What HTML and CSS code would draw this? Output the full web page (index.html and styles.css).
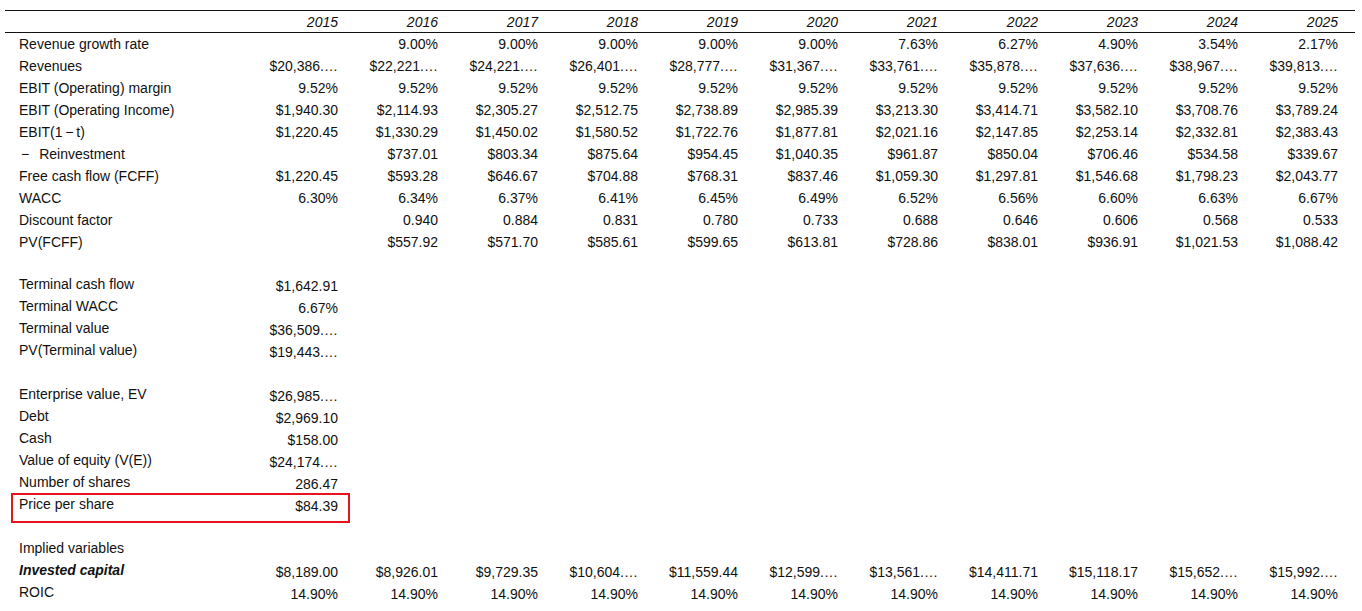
FILE: index.html
```html
<!DOCTYPE html>
<html lang="en">
<head>
<meta charset="utf-8">
<title>DCF valuation</title>
<link rel="stylesheet" href="styles.css">
</head>
<body>
<table class="dcf">
  <colgroup>
    <col class="c-label">
    <col class="c-val"><col class="c-val"><col class="c-val"><col class="c-val"><col class="c-val"><col class="c-val">
    <col class="c-val"><col class="c-val"><col class="c-val"><col class="c-val"><col class="c-val">
  </colgroup>
  <thead>
    <tr>
      <th></th><th>2015</th><th>2016</th><th>2017</th><th>2018</th><th>2019</th><th>2020</th><th>2021</th><th>2022</th><th>2023</th><th>2024</th><th>2025</th>
    </tr>
  </thead>
  <tbody>
    <tr><td class="label">Revenue growth rate</td><td></td><td>9.00%</td><td>9.00%</td><td>9.00%</td><td>9.00%</td><td>9.00%</td><td>7.63%</td><td>6.27%</td><td>4.90%</td><td>3.54%</td><td>2.17%</td></tr>
    <tr><td class="label">Revenues</td><td>$20,386.…</td><td>$22,221.…</td><td>$24,221.…</td><td>$26,401.…</td><td>$28,777.…</td><td>$31,367.…</td><td>$33,761.…</td><td>$35,878.…</td><td>$37,636.…</td><td>$38,967.…</td><td>$39,813.…</td></tr>
    <tr><td class="label">EBIT (Operating) margin</td><td>9.52%</td><td>9.52%</td><td>9.52%</td><td>9.52%</td><td>9.52%</td><td>9.52%</td><td>9.52%</td><td>9.52%</td><td>9.52%</td><td>9.52%</td><td>9.52%</td></tr>
    <tr><td class="label">EBIT (Operating Income)</td><td>$1,940.30</td><td>$2,114.93</td><td>$2,305.27</td><td>$2,512.75</td><td>$2,738.89</td><td>$2,985.39</td><td>$3,213.30</td><td>$3,414.71</td><td>$3,582.10</td><td>$3,708.76</td><td>$3,789.24</td></tr>
    <tr><td class="label">EBIT(1&thinsp;−&thinsp;t)</td><td>$1,220.45</td><td>$1,330.29</td><td>$1,450.02</td><td>$1,580.52</td><td>$1,722.76</td><td>$1,877.81</td><td>$2,021.16</td><td>$2,147.85</td><td>$2,253.14</td><td>$2,332.81</td><td>$2,383.43</td></tr>
    <tr><td class="label"><span class="minus">−</span>Reinvestment</td><td></td><td>$737.01</td><td>$803.34</td><td>$875.64</td><td>$954.45</td><td>$1,040.35</td><td>$961.87</td><td>$850.04</td><td>$706.46</td><td>$534.58</td><td>$339.67</td></tr>
    <tr><td class="label">Free cash flow (FCFF)</td><td>$1,220.45</td><td>$593.28</td><td>$646.67</td><td>$704.88</td><td>$768.31</td><td>$837.46</td><td>$1,059.30</td><td>$1,297.81</td><td>$1,546.68</td><td>$1,798.23</td><td>$2,043.77</td></tr>
    <tr><td class="label">WACC</td><td>6.30%</td><td>6.34%</td><td>6.37%</td><td>6.41%</td><td>6.45%</td><td>6.49%</td><td>6.52%</td><td>6.56%</td><td>6.60%</td><td>6.63%</td><td>6.67%</td></tr>
    <tr><td class="label">Discount factor</td><td></td><td>0.940</td><td>0.884</td><td>0.831</td><td>0.780</td><td>0.733</td><td>0.688</td><td>0.646</td><td>0.606</td><td>0.568</td><td>0.533</td></tr>
    <tr><td class="label">PV(FCFF)</td><td></td><td>$557.92</td><td>$571.70</td><td>$585.61</td><td>$599.65</td><td>$613.81</td><td>$728.86</td><td>$838.01</td><td>$936.91</td><td>$1,021.53</td><td>$1,088.42</td></tr>
  </tbody>
  <tbody class="sec">
    <tr class="spacer"><td colspan="12"></td></tr>
    <tr><td class="label">Terminal cash flow</td><td>$1,642.91</td><td colspan="10"></td></tr>
    <tr><td class="label">Terminal WACC</td><td>6.67%</td><td colspan="10"></td></tr>
    <tr><td class="label">Terminal value</td><td>$36,509.…</td><td colspan="10"></td></tr>
    <tr><td class="label">PV(Terminal value)</td><td>$19,443.…</td><td colspan="10"></td></tr>
    <tr class="spacer"><td colspan="12"></td></tr>
    <tr><td class="label">Enterprise value, EV</td><td>$26,985.…</td><td colspan="10"></td></tr>
    <tr><td class="label">Debt</td><td>$2,969.10</td><td colspan="10"></td></tr>
    <tr><td class="label">Cash</td><td>$158.00</td><td colspan="10"></td></tr>
    <tr><td class="label">Value of equity (V(E))</td><td>$24,174.…</td><td colspan="10"></td></tr>
    <tr><td class="label">Number of shares</td><td>286.47</td><td colspan="10"></td></tr>
    <tr class="highlight"><td class="label">Price per share</td><td>$84.39</td><td colspan="10"></td></tr>
    <tr class="spacer"><td colspan="12"></td></tr>
    <tr><td class="label">Implied variables</td><td colspan="11"></td></tr>
    <tr><td class="label strong">Invested capital</td><td>$8,189.00</td><td>$8,926.01</td><td>$9,729.35</td><td>$10,604.…</td><td>$11,559.44</td><td>$12,599.…</td><td>$13,561.…</td><td>$14,411.71</td><td>$15,118.17</td><td>$15,652.…</td><td>$15,992.…</td></tr>
    <tr><td class="label">ROIC</td><td>14.90%</td><td>14.90%</td><td>14.90%</td><td>14.90%</td><td>14.90%</td><td>14.90%</td><td>14.90%</td><td>14.90%</td><td>14.90%</td><td>14.90%</td><td>14.90%</td></tr>
  </tbody>
</table>
</body>
</html>
```

FILE: styles.css
```css
html, body {
  margin: 0;
  padding: 0;
  background: #ffffff;
}

body {
  padding: 10px 0 0 5px;
  font-family: "Liberation Sans", Arial, Helvetica, sans-serif;
  font-size: 14px;
  color: #111111;
}

.dcf {
  width: 1350px;
  border-collapse: collapse;
  table-layout: fixed;
}

.c-label { width: 250px; }
.c-val { width: 100px; }

.dcf thead tr {
  height: 22px;
}

.dcf tbody tr {
  height: 22px;
}

.dcf th {
  padding: 0 17px 0 0;
  line-height: 20px;
  text-align: right;
  font-style: italic;
  font-weight: normal;
  border-top: 1px solid #111111;
  border-bottom: 1px solid #111111;
  vertical-align: middle;
}

.dcf td {
  padding: 0 17px 0 0;
  line-height: 22px;
  text-align: right;
  vertical-align: middle;
  white-space: nowrap;
}

.dcf td.label {
  text-align: left;
  padding-left: 14px;
  padding-right: 0;
}

.sec td.label {
  line-height: 18px;
  vertical-align: top;
}

.label.strong {
  font-weight: bold;
  font-style: italic;
}

.minus {
  display: inline-block;
  margin-right: 10px;
  margin-left: 2px;
}

.highlight td.label {
  position: relative;
}

.highlight td.label::after {
  content: "";
  position: absolute;
  left: 6px;
  top: -2px;
  width: 339px;
  height: 30px;
  box-sizing: border-box;
  border: 2px solid #e8141b;
  pointer-events: none;
}
```
